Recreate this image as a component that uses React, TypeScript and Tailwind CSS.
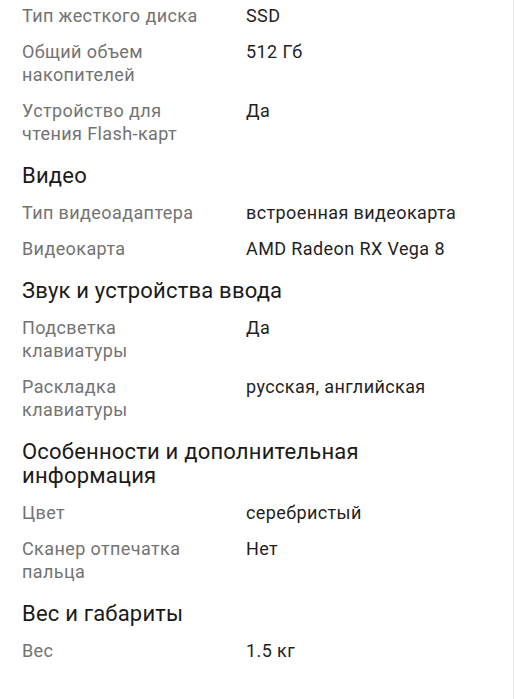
const sections: { title?: string; rows: [string, string][] }[] = [
  {
    rows: [
      ["Тип жесткого диска", "SSD"],
      ["Общий объем накопителей", "512 Гб"],
      ["Устройство для чтения Flash-карт", "Да"],
    ],
  },
  {
    title: "Видео",
    rows: [
      ["Тип видеоадаптера", "встроенная видеокарта"],
      ["Видеокарта", "AMD Radeon RX Vega 8"],
    ],
  },
  {
    title: "Звук и устройства ввода",
    rows: [
      ["Подсветка клавиатуры", "Да"],
      ["Раскладка клавиатуры", "русская, английская"],
    ],
  },
  {
    title: "Особенности и дополнительная информация",
    rows: [
      ["Цвет", "серебристый"],
      ["Сканер отпечатка пальца", "Нет"],
    ],
  },
  {
    title: "Вес и габариты",
    rows: [["Вес", "1.5 кг"]],
  },
];

export default function App() {
  return (
    <div className="w-[514px] h-[699px] overflow-hidden bg-white border-r border-[#e6e6e6] font-['Roboto',sans-serif]">
      <div className="pl-[22px] pr-[44px] pt-[4px]">
        {sections.map((s, i) => (
          <div key={i}>
            {s.title && (
              <h2 className="text-[22px] leading-[24px] tracking-[0.2px] text-[#1a1a1a] mt-[19px] mb-[13px]">{s.title}</h2>
            )}
            <div className="space-y-[13px]">
              {s.rows.map(([k, v]) => (
                <div key={k} className="flex text-[18px] leading-[23px] tracking-[0.4px]">
                  <div className="w-[200px] shrink-0 text-[#737373]">{k}</div>
                  <div className="ml-[24px] text-[#1f1f1f]">{v}</div>
                </div>
              ))}
            </div>
          </div>
        ))}
      </div>
    </div>
  );
}
